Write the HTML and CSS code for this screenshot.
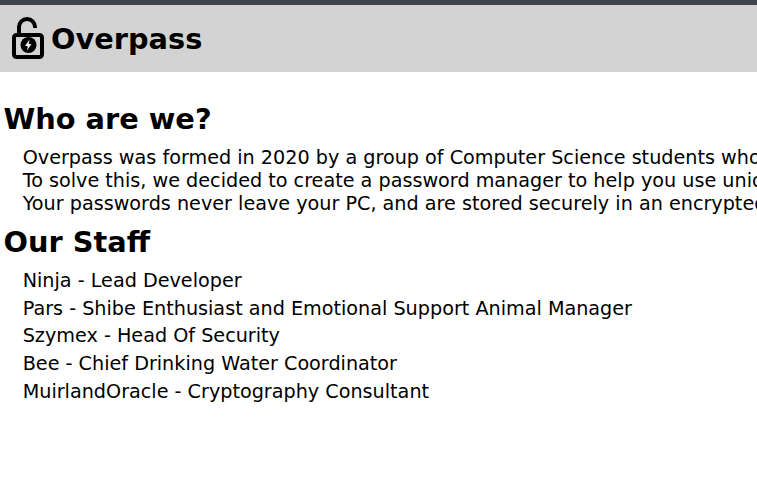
FILE: index.html
```html
<!DOCTYPE html>
<html lang="en">
<head>
    <meta charset="UTF-8">
    <title>Overpass</title>
    <link rel="stylesheet" href="styles.css">
</head>
<body>
    <nav class="topbar">
        <svg class="logo" viewBox="0 0 32 42" width="32" height="42">
            <path d="M7 16V10a8 8 0 0 1 16 0V11" fill="none" stroke="#000" stroke-width="4"/>
            <rect x="2" y="18" width="28" height="22" rx="2.500" fill="none" stroke="#000" stroke-width="4"/>
            <circle cx="16.500" cy="28" r="8" fill="#000"/>
            <path d="M17.500 22.500L13 29H15.800L15 33.500L19.500 27H16.700Z" fill="#eee"/>
        </svg>
        <span class="brand">Overpass</span>
    </nav>
    <main>
        <h2>Who are we?</h2>
        <div class="about">
            <p>Overpass was formed in 2020 by a group of Computer Science students who saw that too many people reuse passwords.</p>
            <p>To solve this, we decided to create a password manager to help you use unique passwords for everything.</p>
            <p>Your passwords never leave your PC, and are stored securely in an encrypted file on your own machine.</p>
        </div>
        <h2>Our Staff</h2>
        <ul class="staff">
            <li>Ninja - Lead Developer</li>
            <li>Pars - Shibe Enthusiast and Emotional Support Animal Manager</li>
            <li>Szymex - Head Of Security</li>
            <li>Bee - Chief Drinking Water Coordinator</li>
            <li>MuirlandOracle - Cryptography Consultant</li>
        </ul>
    </main>
</body>
</html>
```
FILE: styles.css
```css
html, body {
    overflow: hidden;
}
body {
    margin: 0;
    height: 499px;
    font-family: "DejaVu Sans", sans-serif;
    background-color: #fff;
    color: #000;
}
.topbar {
    display: flex;
    align-items: center;
    gap: 7px;
    height: 67px;
    padding-left: 12px;
    background-color: #d3d3d3;
    border-top: 5px solid #3e444d;
}
.logo {
    margin-bottom: 1px;
}
.brand {
    font-size: 28.800px;
    font-weight: bold;
}
main {
    padding: 20px 0 0 3.500px;
}
h2 {
    margin: 10px 0;
    font-size: 28.800px;
    line-height: 34px;
    white-space: nowrap;
}
.about {
    padding-left: 19.200px;
    font-size: 19.200px;
    line-height: 23px;
    white-space: nowrap;
}
.about p {
    margin: 0;
}
.staff {
    display: flex;
    flex-direction: column;
    gap: 5.700px;
    margin: 11px 0 0;
    padding: 0 0 0 19.200px;
    list-style: none;
    font-size: 19.200px;
    line-height: 22px;
}
```
